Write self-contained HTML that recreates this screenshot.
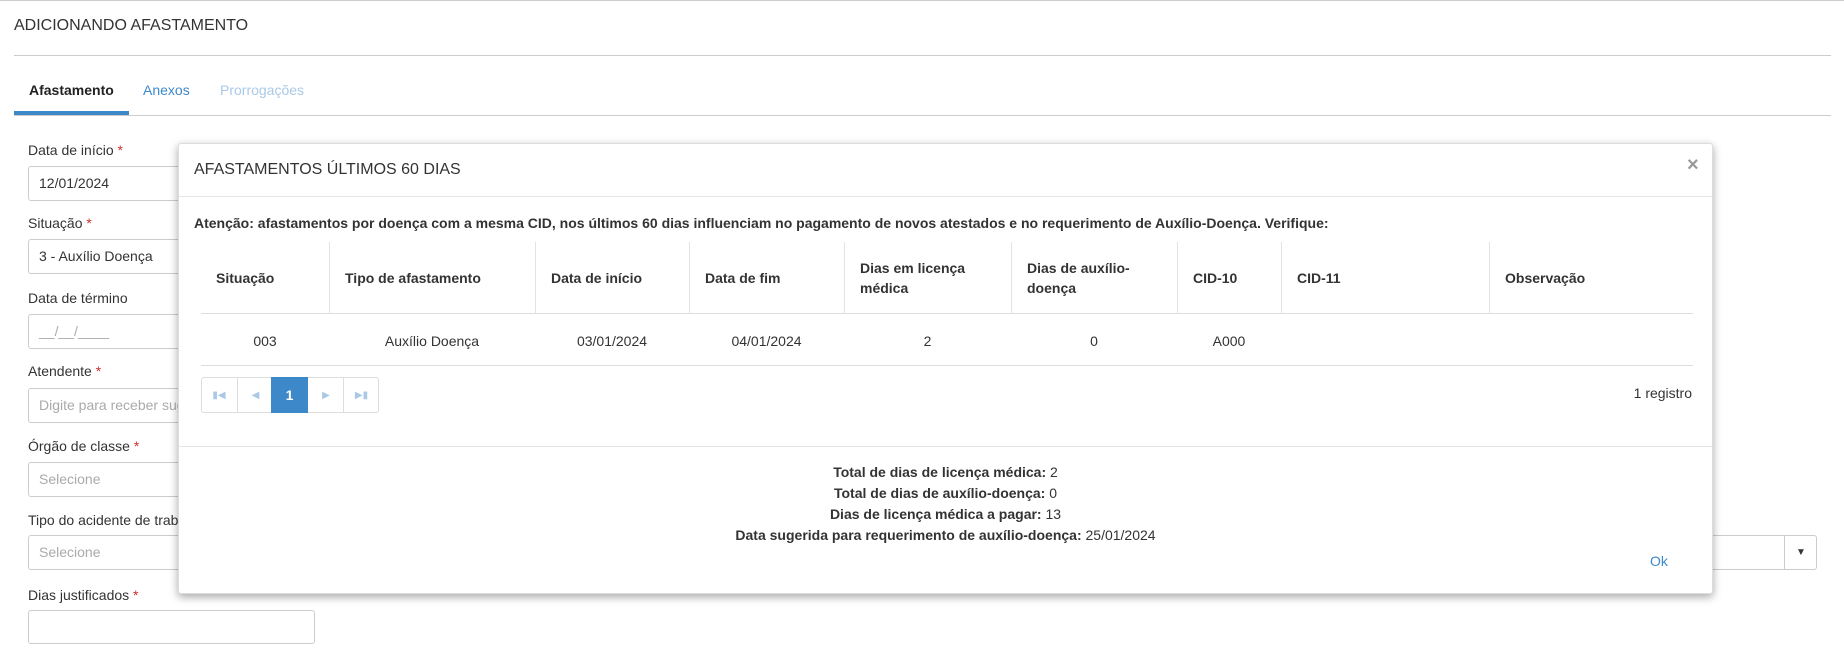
<!DOCTYPE html>
<html><head><meta charset="utf-8"><style>
*{box-sizing:border-box;margin:0;padding:0}
body{width:1844px;height:660px;overflow:hidden;background:#fff;font-family:"Liberation Sans",Arial,sans-serif;color:#333;font-size:14px;position:relative}
.a{position:absolute;white-space:nowrap}
.lbl{position:absolute;left:28px;font-size:14px;color:#333}
.lbl b{color:#c9302c;font-weight:normal}
.inp{position:absolute;left:28px;width:287px;height:35px;border:1px solid #ccc;border-radius:3px;padding:0 10px;line-height:33px;font-size:14px;color:#333}
.ph{color:#aaa}
.modal{position:absolute;left:178px;top:143px;width:1535px;height:451px;background:#fff;border:1px solid #ddd;border-radius:3px;box-shadow:0 3px 9px rgba(0,0,0,.35)}
.th{position:absolute;top:98px;height:72px;border-left:1px solid #e3e3e3;font-weight:bold;font-size:14px;display:flex;align-items:center;padding-left:15px;line-height:20px}
.td{position:absolute;top:189px;font-size:14px;text-align:center}
.pg{position:absolute;top:233px;height:36px;width:36px;border-left:1px solid #ddd;color:#a9c9e6;font-size:10px;display:flex;align-items:center;justify-content:center}
</style></head><body>
<div class="a" style="left:0;top:0;width:1844px;height:1px;background:#ccc"></div>
<div class="a" style="left:14px;top:17px;font-size:16px;color:#333">ADICIONANDO AFASTAMENTO</div>
<div class="a" style="left:14px;top:55px;width:1817px;height:1px;background:#ccc"></div>
<div class="a" style="left:29px;top:82px;font-weight:bold;font-size:14px;color:#222">Afastamento</div>
<div class="a" style="left:143px;top:82px;font-size:14px;color:#3d88c9">Anexos</div>
<div class="a" style="left:220px;top:82px;font-size:14px;color:#a9c9e6">Prorrogações</div>
<div class="a" style="left:14px;top:115px;width:1817px;height:1px;background:#ccc"></div>
<div class="a" style="left:14px;top:111px;width:115px;height:4px;background:#3d88c9"></div>

<div class="lbl" style="top:142px">Data de início <b>*</b></div>
<div class="inp" style="top:166px">12/01/2024</div>
<div class="lbl" style="top:215px">Situação <b>*</b></div>
<div class="inp" style="top:239px">3 - Auxílio Doença</div>
<div class="lbl" style="top:290px">Data de término</div>
<div class="inp ph" style="top:314px">__/__/____</div>
<div class="lbl" style="top:363px">Atendente <b>*</b></div>
<div class="inp ph" style="top:388px">Digite para receber sugestões</div>
<div class="lbl" style="top:438px">Órgão de classe <b>*</b></div>
<div class="inp ph" style="top:462px">Selecione</div>
<div class="lbl" style="top:512px">Tipo do acidente de trabalho</div>
<div class="inp ph" style="top:535px;width:1789px">Selecione</div>
<div class="a" style="left:1784px;top:535px;width:33px;height:35px;border-left:1px solid #ccc;font-size:10px;line-height:35px;text-align:center;color:#333">▼</div>
<div class="lbl" style="top:587px">Dias justificados <b>*</b></div>
<div class="inp" style="top:610px;height:34px"></div>

<div class="modal">
<div class="a" style="left:15px;top:17px;font-size:16px;color:#333">AFASTAMENTOS ÚLTIMOS 60 DIAS</div>
<div class="a" style="left:1508px;top:10px;font-size:20px;font-weight:bold;color:#999">×</div>
<div class="a" style="left:0;top:52px;width:1533px;height:1px;background:#e5e5e5"></div>
<div class="a" style="left:15px;top:71px;font-weight:bold;font-size:14px;color:#333">Atenção: afastamentos por doença com a mesma CID, nos últimos 60 dias influenciam no pagamento de novos atestados e no requerimento de Auxílio-Doença. Verifique:</div>
<div class="th" style="left:22px;width:128px;border-left:none">Situação</div>
<div class="th" style="left:150px;width:206px">Tipo de afastamento</div>
<div class="th" style="left:356px;width:154px">Data de início</div>
<div class="th" style="left:510px;width:155px">Data de fim</div>
<div class="th" style="left:665px;width:167px">Dias em licença<br>médica</div>
<div class="th" style="left:832px;width:166px">Dias de auxílio-<br>doença</div>
<div class="th" style="left:998px;width:104px">CID-10</div>
<div class="th" style="left:1102px;width:208px">CID-11</div>
<div class="th" style="left:1310px;width:204px;padding-left:15px">Observação</div>
<div class="a" style="left:22px;top:169px;width:1492px;height:1px;background:#ddd"></div>
<div class="td" style="left:22px;width:128px">003</div>
<div class="td" style="left:150px;width:206px">Auxílio Doença</div>
<div class="td" style="left:356px;width:154px">03/01/2024</div>
<div class="td" style="left:510px;width:155px">04/01/2024</div>
<div class="td" style="left:665px;width:167px">2</div>
<div class="td" style="left:832px;width:166px">0</div>
<div class="td" style="left:998px;width:104px">A000</div>
<div class="a" style="left:22px;top:221px;width:1492px;height:1px;background:#ddd"></div>
<div class="a" style="left:22px;top:233px;width:178px;height:36px;border:1px solid #ddd;border-radius:3px"></div>
<div class="pg" style="left:22px;border-left:none">&#9646;&#9664;</div>
<div class="pg" style="left:58px">◀</div>
<div class="pg" style="left:92px;width:37px;background:#3d88c9;color:#fff;font-size:14px;font-weight:bold;border:none">1</div>
<div class="pg" style="left:129px;border-left:none">▶</div>
<div class="pg" style="left:164px">▶&#9646;</div>
<div class="a" style="right:20px;top:241px;font-size:14px">1 registro</div>
<div class="a" style="left:0;top:302px;width:1533px;height:1px;background:#e5e5e5"></div>
<div class="a" style="left:0;top:318px;width:1533px;text-align:center;line-height:21px;font-size:14px">
<b>Total de dias de licença médica:</b> 2<br><b>Total de dias de auxílio-doença:</b> 0<br><b>Dias de licença médica a pagar:</b> 13<br><b>Data sugerida para requerimento de auxílio-doença:</b> 25/01/2024</div>
<div class="a" style="left:1471px;top:409px;font-size:14px;color:#3d88c9">Ok</div>
</div>
</body></html>
